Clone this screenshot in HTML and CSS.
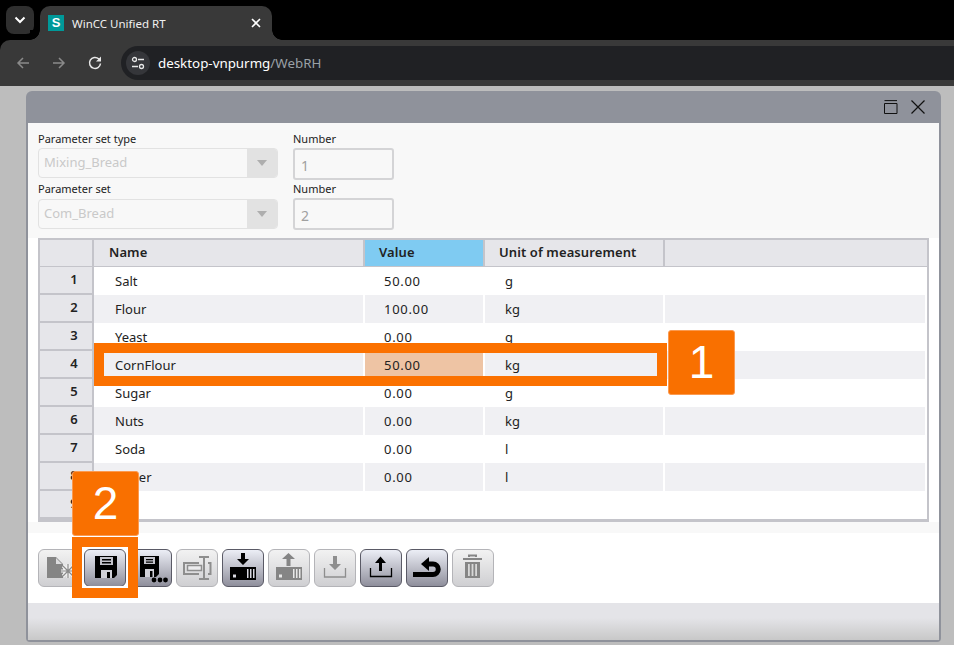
FILE: index.html
```html
<!DOCTYPE html>
<html lang="en">
<head>
<meta charset="utf-8">
<title>WinCC Unified RT</title>
<link rel="stylesheet" href="styles.css">
</head>
<body>
<div class="screen">
  <header class="tabstrip">
    <div class="tabsearch"><svg width="12" height="8" viewBox="0 0 12 8"><path d="M1.500 1.500 6 6l4.500-4.500" fill="none" stroke="#fff" stroke-width="2"/></svg></div>
    <div class="tab">
      <span class="favicon">S</span>
      <span class="tabtitle">WinCC Unified RT</span>
      <svg class="tabclose" width="10" height="10" viewBox="0 0 10 10"><path d="M1 1l8 8M9 1l-8 8" stroke="#fff" stroke-width="1.600"/></svg>
    </div>
  </header>
  <nav class="toolbar">
    <svg class="navicon" width="16" height="16" viewBox="0 0 16 16"><path d="M14 8H3M8 3 3 8l5 5" fill="none" stroke="#8a8a8a" stroke-width="1.500"/></svg>
    <svg class="navicon" width="16" height="16" viewBox="0 0 16 16"><path d="M2 8h11M8 3l5 5-5 5" fill="none" stroke="#8a8a8a" stroke-width="1.500"/></svg>
    <svg class="navicon" width="16" height="16" viewBox="0 0 16 16"><path d="M13.500 8.500A5.500 5.500 0 1 1 11.700 3.800L13.500 5.500" fill="none" stroke="#e8e8e8" stroke-width="1.500"/><path d="M14 1.500V6.500H9z" fill="#e8e8e8"/></svg>
    <div class="omnibox">
      <span class="siteinfo"><svg width="14" height="14" viewBox="0 0 14 14"><circle cx="3.500" cy="3.500" r="2" fill="none" stroke="#e8e8e8" stroke-width="1.300"/><path d="M7 3.500h6M1 10.500h6" stroke="#e8e8e8" stroke-width="1.300"/><circle cx="10.500" cy="10.500" r="2" fill="none" stroke="#e8e8e8" stroke-width="1.300"/></svg></span>
      <span class="url">desktop-vnpurmg<span class="urlpath">/WebRH</span></span>
    </div>
  </nav>
  <main class="page">
    <section class="window">
      <div class="titlebar">
        <svg width="14" height="14" viewBox="0 0 14 14"><path d="M.5 3.500h12.500v10H.5zM.5 .6h12.500" fill="none" stroke="#111" stroke-width="1"/></svg>
        <svg width="14" height="14" viewBox="0 0 14 14"><path d="M.5 .5l13 13M13.500 .5l-13 13" stroke="#111" stroke-width="1.200"/></svg>
      </div>
      <div class="content">
        <form class="form">
          <div class="field"><label class="label">Parameter set type</label>
            <div class="combo"><span class="combotext">Mixing_Bread</span><span class="comboarrow"></span></div></div>
          <div class="field"><label class="label">Number</label><div class="numbox">1</div></div>
          <div class="field"><label class="label">Parameter set</label>
            <div class="combo combo-low"><span class="combotext">Com_Bread</span><span class="comboarrow"></span></div></div>
          <div class="field"><label class="label">Number</label><div class="numbox">2</div></div>
        </form>
        <div class="table">
          <div class="row head">
            <div class="rh"></div><div class="c c1 hc">Name</div><div class="c c2 hc active">Value</div><div class="c c3 hc">Unit of measurement</div><div class="c c4 hc"></div>
          </div>
          <div class="row"><div class="rh">1</div><div class="c c1">Salt</div><div class="c c2">50.00</div><div class="c c3">g</div><div class="c c4"></div></div>
          <div class="row alt"><div class="rh">2</div><div class="c c1">Flour</div><div class="c c2">100.00</div><div class="c c3">kg</div><div class="c c4"></div></div>
          <div class="row"><div class="rh">3</div><div class="c c1">Yeast</div><div class="c c2">0.00</div><div class="c c3">g</div><div class="c c4"></div></div>
          <div class="row alt"><div class="rh">4</div><div class="c c1">CornFlour</div><div class="c c2 edited">50.00</div><div class="c c3">kg</div><div class="c c4"></div></div>
          <div class="row"><div class="rh">5</div><div class="c c1">Sugar</div><div class="c c2">0.00</div><div class="c c3">g</div><div class="c c4"></div></div>
          <div class="row alt"><div class="rh">6</div><div class="c c1">Nuts</div><div class="c c2">0.00</div><div class="c c3">kg</div><div class="c c4"></div></div>
          <div class="row"><div class="rh">7</div><div class="c c1">Soda</div><div class="c c2">0.00</div><div class="c c3">l</div><div class="c c4"></div></div>
          <div class="row alt"><div class="rh">8</div><div class="c c1">Water</div><div class="c c2">0.00</div><div class="c c3">l</div><div class="c c4"></div></div>
          <div class="row"><div class="rh">9</div><div class="c c1"></div><div class="c c2"></div><div class="c c3"></div><div class="c c4"></div></div>
        </div>
        <div class="actions">
          <button class="btn off" type="button"><svg width="42" height="38" viewBox="0 0 42 38"><path d="M9 8h9l7 7v14H9z" fill="#858585"/><path d="M18 9v6h6z" fill="#dcdcde"/><path d="M30 15v14M23 22h14M25 17l10 10M35 17 25 27" stroke="#f2f2f2" stroke-width="3.200"/><path d="M30 15v14M23 22h14M25 17l10 10M35 17 25 27" stroke="#8a8a8a" stroke-width="1.200"/></svg></button>
          <button class="btn on" type="button"><svg width="42" height="38" viewBox="0 0 42 38"><path d="M11 7h22v19l-3 3H11z"/><path d="M16 8h13v8H16z" fill="#c4c4cc"/><path d="M18 10h9v1.500h-9zM18 13h9v1.500h-9z"/><path d="M17 21h11v8H17z" fill="#d0d0d8"/><path d="M23 23h3v6h-3z"/></svg></button>
          <button class="btn on" type="button"><svg width="42" height="38" viewBox="0 0 42 38"><path d="M10 7h19v18l-3 3H10z"/><path d="M14 8h11v7H14z" fill="#c4c4cc"/><path d="M16 10h7v1.300h-7zM16 12.500h7v1.300h-7z"/><path d="M15 20h9v8h-9z" fill="#d0d0d8"/><path d="M20 22h2.500v6H20z"/><circle cx="24" cy="31" r="2.400"/><circle cx="30" cy="31" r="2.400"/><circle cx="35.500" cy="31" r="2.400"/></svg></button>
          <button class="btn off" type="button"><svg width="42" height="38" viewBox="0 0 42 38"><path d="M23 14H8v11h15M32 14h2.500v11H32" fill="none" stroke="#8e8e8e" stroke-width="2"/><path d="M11.500 16.500h14v5h-14z" fill="#ececee" stroke="#8e8e8e" stroke-width="1.500"/><path d="M23 7h10v2h-4v20h4v2H23v-2h4V9h-4z" fill="#8e8e8e"/></svg></button>
          <button class="btn on" type="button"><svg width="42" height="38" viewBox="0 0 42 38"><path d="M19 4h4v6h4l-6 6-6-6h4z"/><path d="M8 18h26v13H8z"/><path d="M11 25.500h3v3h-3z" fill="#d8d8e0"/><path d="M25 20h1.500v9H25zM28 20h1.500v9H28zM31 20h1.500v9H31z" fill="#d8d8e0"/></svg></button>
          <button class="btn off" type="button"><svg width="42" height="38" viewBox="0 0 42 38"><path d="M18.500 17v-7H14l6.500-6 6.500 6h-4.500v7z" fill="#858585"/><path d="M8 18h26v13H8z" fill="#858585"/><path d="M11 25.500h3v3h-3z" fill="#e8e8e8"/><path d="M25 20h1.500v9H25zM28 20h1.500v9H28zM31 20h1.500v9H31z" fill="#e8e8e8"/></svg></button>
          <button class="btn off" type="button"><svg width="42" height="38" viewBox="0 0 42 38"><path d="M19 7h4v8h4l-6 6-6-6h4z" fill="#8e8e8e"/><path d="M10.500 19v9h21v-9" fill="none" stroke="#8e8e8e" stroke-width="1.300"/></svg></button>
          <button class="btn on" type="button"><svg width="42" height="38" viewBox="0 0 42 38"><path d="M19 22v-8h-4l5.500-6.500L26 14h-4v8z"/><path d="M10.500 19v8.500h21V19" fill="none" stroke="#000" stroke-width="1.300"/></svg></button>
          <button class="btn on" type="button"><svg width="42" height="38" viewBox="0 0 42 38"><path d="M7 25.500h20a5.250 5.250 0 0 0 0-10.500h-6" fill="none" stroke="#000" stroke-width="5"/><path d="M23 8v14l-8-7z"/></svg></button>
          <button class="btn off" type="button"><svg width="42" height="38" viewBox="0 0 42 38"><path d="M17 8V6.500h7V8M11 10h19" fill="none" stroke="#858585" stroke-width="2"/><path d="M13 13h15v16H13z" fill="#858585"/><path d="M16 15h1.800v12H16zM19.600 15h1.800v12h-1.800zM23.200 15H25v12h-1.800z" fill="#d8d8d8"/></svg></button>
        </div>
      </div>
      <div class="footer"></div>
    </section>
    <div class="mark-row"></div>
    <div class="badge badge-one">1</div>
    <div class="badge badge-two">2</div>
    <div class="mark-btn"></div>
  </main>
</div>
</body>
</html>
```
FILE: styles.css
```css
* { box-sizing: border-box; }
html, body { margin: 0; padding: 0; }
body { width: 954px; height: 645px; overflow: hidden; background: #bdbdbd; font-family: "Noto Sans", "Open Sans", sans-serif; }
.screen { width: 954px; height: 645px; display: flex; flex-direction: column; background: #000; }

.tabstrip { height: 40px; background: #000; display: flex; align-items: flex-end; padding-left: 6px; flex: none; }
.tabsearch { width: 28px; height: 28px; margin-bottom: 6px; border-radius: 8px; background: #2f2f2f; display: flex; align-items: center; justify-content: center; }
.tab { position: relative; width: 232px; height: 34px; margin-left: 6px; background: #393939; border-radius: 10px 10px 0 0; display: flex; align-items: center; padding: 0 11px 0 8px; color: #f0f0f0; }
.tab::before, .tab::after { content: ""; position: absolute; bottom: 0; width: 10px; height: 10px; }
.tab::before { right: 100%; background: radial-gradient(circle at 0 0, #000 9.500px, #393939 10px); }
.tab::after { left: 100%; background: radial-gradient(circle at 100% 0, #000 9.500px, #393939 10px); }
.favicon { width: 16px; height: 16px; background: #009999; color: #fff; font: bold 13px/16px "Liberation Sans", sans-serif; text-align: center; flex: none; }
.tabtitle { margin-left: 8px; font-size: 11.500px; flex: 1; white-space: nowrap; }

.toolbar { height: 46px; background: #393939; display: flex; align-items: center; padding-left: 15px; flex: none; border-top-left-radius: 10px; }
.navicon { margin-right: 20px; flex: none; }
.navicon:nth-child(3) { margin-right: 18px; }
.omnibox { flex: 1; height: 34px; background: #202124; border-radius: 17px 0 0 17px; display: flex; align-items: center; padding-left: 5px; }
.siteinfo { width: 24px; height: 24px; border-radius: 50%; background: #35363a; display: flex; align-items: center; justify-content: center; }
.url { margin-left: 8px; font-size: 13.350px; color: #fff; white-space: nowrap; }
.urlpath { color: #9aa0a6; }

.page { position: relative; flex: 1; padding: 5px 13px 3px 26px; background: #bdbdbd; min-height: 0; }
.window { height: 551px; border-radius: 6px 6px 4px 4px; background: #8f929b; padding: 0 2px 2px; display: flex; flex-direction: column; }
.titlebar { height: 32px; display: flex; justify-content: flex-end; align-items: center; gap: 13px; padding: 0 14px 0 0; flex: none; }
.content { height: 480px; flex: none; background: #fff; display: flex; flex-direction: column; }
.form { background: #f8f8f8; padding: 8px 0 0 10px; height: 115px; display: grid; grid-template-columns: 240px 101px; column-gap: 15px; grid-auto-rows: 50px; flex: none; }
.field { height: 50px; }
.label { display: block; height: 17px; font-size: 11px; line-height: 16px; color: #222; }
.combo { height: 30px; border: 1px solid #e2e2e2; border-radius: 4px; background: #f8f8f8; display: flex; color: #c9c9c9; font-size: 13px; line-height: 26px; }
.combo-low { margin-top: 1px; }
.combotext { flex: 1; padding-left: 5px; }
.comboarrow { width: 30px; background: #e2e2e2; border-radius: 0 3px 3px 0; display: flex; align-items: center; justify-content: center; }
.comboarrow::after { content: ""; border: 5px solid transparent; border-top: 6px solid #aeaeae; border-bottom: 0; }
.numbox { width: 101px; height: 32px; border: 2px solid #d4d4d6; border-radius: 3px; background: #f8f8f8; color: #a0a0a0; font-size: 14px; line-height: 31px; padding-left: 6px; }

.table { height: 284px; margin: 0 10px; background: #c4c4ca; padding: 2px 2px 3px; overflow: hidden; flex: none; }
.row { height: 28px; display: flex; background: #fff; font-size: 13px; color: #222; }
.row.alt { background: #f0f0f3; }
.row.head { height: 27px; background: #e6e6ea; }
.rh { width: 54px; height: 28px; background: #e6e6ea; flex: none; text-align: center; line-height: 24px; font-weight: 600; font-size: 13px; padding-left: 16px; color: #222; border-right: 2px solid #c4c4ca; border-bottom: 2px solid #c4c4ca; }
.row.head .rh { height: 27px; border-bottom: 1px solid #c4c4ca; }
.c { line-height: 28px; padding-left: 20px; white-space: nowrap; }
.c1 { width: 271px; padding-left: 21px; border-right: 2px solid #fff; }
.row.alt .c { border-right: 2px solid #fff; }
.c2 { width: 120px; padding-left: 19px; border-right: 2px solid #fff; letter-spacing: .7px; }
.c3 { width: 180px; border-right: 2px solid #fff; }
.row .c4 { flex: 1; border-right: 0; }
.edited { background: #eec4a4; }
.row.head .c { height: 26px; line-height: 25px; font-weight: 600; font-size: 13px; letter-spacing: .1px; padding-left: 15px; border-right: 2px solid #c4c4ca; box-shadow: 0 1px 0 #c4c4ca; }
.row.head .c2 { padding-left: 14px; }
.row.head .c3 { padding-left: 14px; }
.row.head .c4 { border-right: 0; }
.hc.active { background: #7fcbf2; }

.actions { flex: 1; display: flex; gap: 4px; align-items: flex-start; padding: 27px 0 0 10px; background: #fff; box-shadow: inset 0 11px 0 #f8f8f8; }
.btn { width: 42px; height: 38px; padding: 0; border-radius: 6px; display: block; flex: none; }
.btn svg { display: block; margin: -1px; }
.btn.on { background: linear-gradient(#eceef6, #8f8f9c); border: 1px solid #5a5a66; }
.btn.off { background: linear-gradient(#f2f2f2, #cfcfd2); border: 1px solid #b4b4b8; }

.footer { height: 37px; background: linear-gradient(#e4e4e8 40%, #c8c8c8); flex: none; }

.mark-row { position: absolute; left: 94px; top: 257px; width: 573px; height: 43px; border: 10px solid #fb7100; }
.mark-btn { position: absolute; left: 72px; top: 451px; width: 66px; height: 61px; border: 10px solid #fb7100; box-shadow: inset 0 0 0 2px #fff; }
.badge { position: absolute; width: 67px; height: 65px; background: #f97000; border: 1px solid #fb9a50; border-radius: 3px; color: #fff; font-family: "Liberation Sans", sans-serif; font-size: 46px; line-height: 63px; text-align: center; }
.badge-one { left: 668px; top: 244px; }
.badge-two { left: 72px; top: 385px; }
```
